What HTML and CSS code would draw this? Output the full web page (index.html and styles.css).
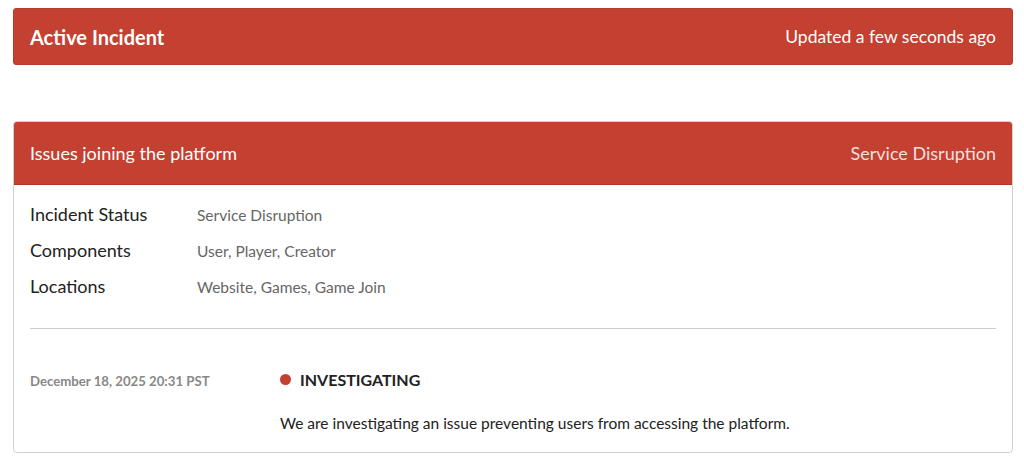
FILE: index.html
```html
<!DOCTYPE html>
<html>
<head>
<meta charset="utf-8">
<link rel="stylesheet" href="styles.css">
</head>
<body>
<div class="page">
  <div class="banner">
    <span class="banner-title">Active Incident</span>
    <span class="banner-updated">Updated a few seconds ago</span>
  </div>

  <div class="card">
    <div class="card-head">
      <span class="card-title">Issues joining the platform</span>
      <span class="card-status">Service Disruption</span>
    </div>
    <div class="card-body">
      <div class="info">
        <div class="info-row"><span class="info-label">Incident Status</span><span class="info-value">Service Disruption</span></div>
        <div class="info-row"><span class="info-label">Components</span><span class="info-value">User, Player, Creator</span></div>
        <div class="info-row"><span class="info-label">Locations</span><span class="info-value">Website, Games, Game Join</span></div>
      </div>
      <hr class="divider">
      <div class="update">
        <div class="update-time">December 18, 2025 20:31 PST</div>
        <div class="update-main">
          <div class="update-state"><span class="dot"></span>INVESTIGATING</div>
          <div class="update-msg">We are investigating an issue preventing users from accessing the platform.</div>
        </div>
      </div>
    </div>
  </div>
</div>
</body>
</html>
```
FILE: styles.css
```css
* { box-sizing: border-box; }
html, body { margin: 0; padding: 0; background: #fff; }
body { font-family: Lato, "Open Sans", sans-serif; color: #222; }
.page { width: 1000px; margin: 8px 0 0 13px; }

.banner {
  height: 57px;
  background: #c44031;
  border-radius: 3px;
  border: 1px solid #b83a2c;
  display: flex;
  align-items: center;
  justify-content: space-between;
  padding: 0 16px;
  color: #fff;
}
.banner-title { font-size: 20px; font-weight: 700; }
.banner-updated { font-size: 17.5px; }

.card {
  margin-top: 56px;
  border: 1px solid #d0d0d0;
  border-radius: 4px;
  overflow: hidden;
}
.card-head {
  height: 63px;
  background: #c44031;
  border-bottom: 1px solid #b73426;
  display: flex;
  align-items: center;
  justify-content: space-between;
  padding: 0 16px;
  color: #fff;
}
.card-title { font-size: 18px; }
.card-status { font-size: 18px; color: rgba(255,255,255,0.85); }

.card-body { padding: 18px 16px 20px 16px; }
.info { display: flex; flex-direction: column; gap: 15px; }
.info-row { display: flex; align-items: baseline; height: 21px; }
.info-label { width: 167px; font-size: 18px; color: #222; }
.info-value { font-size: 15.5px; color: #666; }

.divider {
  margin: 32px 0 0 0;
  border: 0;
  border-top: 1px solid #ccc;
}

.update { display: flex; padding-top: 41px; }
.update-time { width: 250px; font-size: 13.2px; font-weight: 700; color: #888; padding-top: 3px; }
.update-main { display: flex; flex-direction: column; }
.update-state { display: flex; align-items: center; font-size: 16px; font-weight: 700; color: #222; }
.dot { width: 11px; height: 11px; border-radius: 50%; background: #c44031; margin-right: 9px; }
.update-msg { margin-top: 25px; font-size: 15.5px; color: #222; }
```
